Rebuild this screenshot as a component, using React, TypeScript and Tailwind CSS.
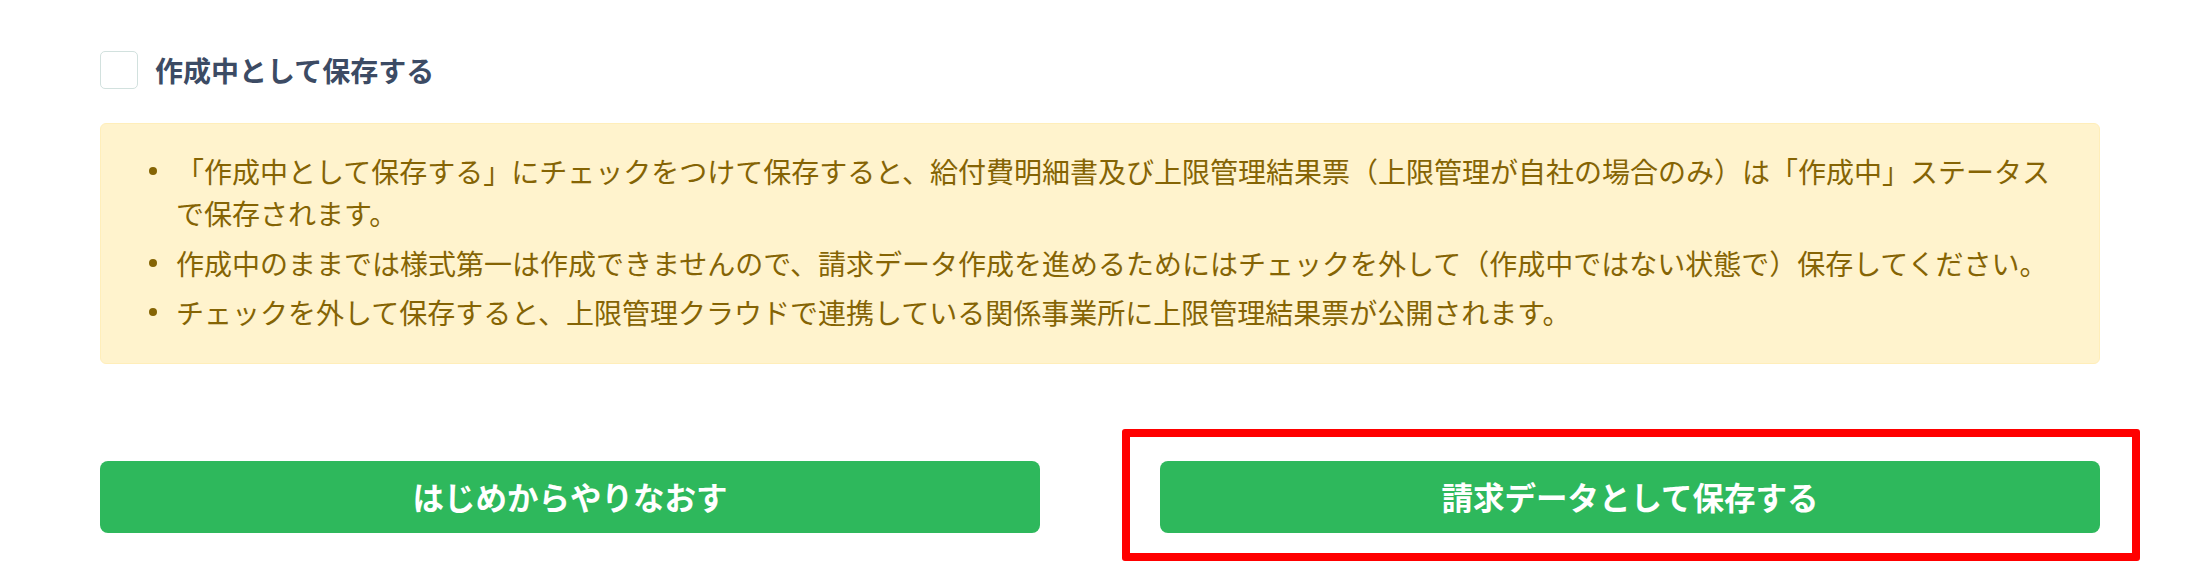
const notes = [
  "「作成中として保存する」にチェックをつけて保存すると、給付費明細書及び上限管理結果票（上限管理が自社の場合のみ）は「作成中」ステータスで保存されます。",
  "作成中のままでは様式第一は作成できませんので、請求データ作成を進めるためにはチェックを外して（作成中ではない状態で）保存してください。",
  "チェックを外して保存すると、上限管理クラウドで連携している関係事業所に上限管理結果票が公開されます。",
];

const App = () => {
  return (
    <div className="w-[2204px] h-[578px] bg-white font-['Noto_Sans_CJK_JP','Noto_Sans',sans-serif]">
      <div className="ml-[100px] w-[2000px] pt-[51px]">
        <label className="flex items-center gap-[17px] h-[38px]">
          <span className="w-[38px] h-[38px] shrink-0 rounded-[5px] border border-[#d2e1de] bg-white" />
          <span className="text-[28px] leading-[38px] font-semibold text-[#3c4b64]">
            作成中として保存する
          </span>
        </label>

        <div className="mt-[34px] rounded-[6px] border border-[#ffeeba] bg-[#fff3cd] pt-[26px] pb-[22px] pl-[48px] pr-[30px] text-[28px] leading-[42px] text-[#856404]">
          <ul>
            {notes.map((note, index) => (
              <li key={index} className="flex mb-[7.5px]">
                <span className="w-[27px] h-[42px] shrink-0 flex items-center">
                  <span className="w-[8px] h-[8px] rounded-full bg-[#856404]" />
                </span>
                <span>{note}</span>
              </li>
            ))}
          </ul>
        </div>

        <div className="mt-[97px] grid grid-cols-2 gap-[120px]">
          <button className="h-[72px] rounded-[8px] bg-[#2eb85c] text-white text-[31.5px] font-semibold">
            はじめからやりなおす
          </button>
          <div className="relative">
            <button className="w-full h-[72px] rounded-[8px] bg-[#2eb85c] text-white text-[31.5px] font-semibold">
              請求データとして保存する
            </button>
            <div className="absolute -left-[38px] -top-[32px] -right-[40px] -bottom-[28px] border-[8px] border-[#ff0000] rounded-[3px] pointer-events-none" />
          </div>
        </div>
      </div>
    </div>
  );
};

export default App;
